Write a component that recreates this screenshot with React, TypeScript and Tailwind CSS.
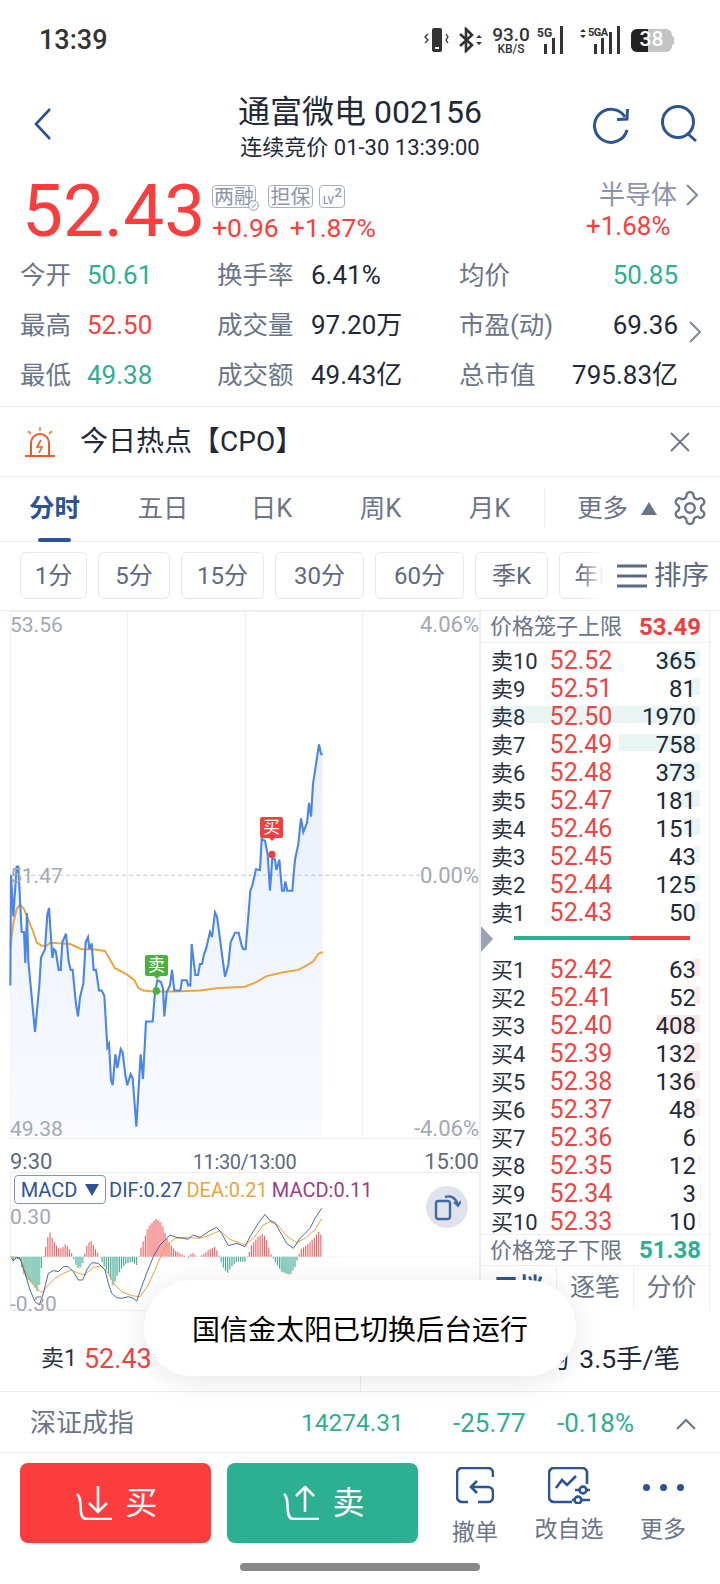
import React from "react";

const blue =
  "31,1090 33,770 40,890 50,745 55,745 65,935 72,935 76,1025 81,880 85,1020 105,1225 118,1090 123,1010 135,985 142,885 147,865 157,1010 162,985 167,990 176,1045 182,1045 187,965 198,940 206,1020 212,1045 218,1045 228,1145 234,1180 240,1125 250,1085 257,965 264,950 268,985 275,968 281,1045 288,1045 297,1105 305,1105 313,1120 322,1270 327,1260 333,1365 338,1380 346,1290 352,1330 362,1275 368,1285 376,1350 382,1380 392,1348 398,1360 409,1500 422,1290 429,1362 438,1195 458,1195 465,1110 472,1075 483,1080 489,1100 493,1180 500,1110 510,1090 516,1045 523,1105 541,1105 546,1075 560,1075 565,1090 571,1090 575,970 586,1060 594,1060 600,1028 606,1028 612,1000 618,985 630,935 636,950 645,878 651,890 675,1065 685,1030 692,965 705,937 716,937 725,975 730,985 737,985 751,815 757,800 768,753 780,755 785,665 795,670 803,710 810,815 817,720 825,725 829,755 838,725 846,815 852,815 856,788 862,815 877,815 885,725 895,680 903,605 910,645 921,618 927,560 933,600 939,505 957,390 963,418 968,420";
const avg =
  "31,980 40,910 50,868 60,856 72,868 85,900 100,935 110,965 125,975 140,975 150,966 175,968 210,970 245,985 280,985 315,990 330,1015 345,1040 380,1058 403,1075 415,1097 430,1105 460,1108 520,1108 600,1105 650,1098 735,1094 770,1080 800,1063 850,1052 895,1045 915,1035 940,1020 955,998 968,993";
const dif =
  "33,382 40,392 50,382 60,385 75,430 90,480 105,515 118,525 130,490 145,430 160,422 175,425 190,410 205,410 220,425 235,450 248,450 260,420 275,398 295,400 315,420 325,460 335,490 350,503 365,505 385,500 400,505 410,513 425,470 440,430 460,380 480,345 510,315 530,322 550,325 565,328 578,315 600,322 625,305 650,292 665,310 685,347 710,340 735,350 750,320 775,280 795,253 810,272 825,278 840,305 860,340 880,355 900,325 930,295 945,265 965,235";
const dea =
  "33,380 60,385 80,430 100,465 125,488 145,465 165,445 190,430 215,420 235,430 255,435 280,412 305,408 325,430 345,465 365,485 395,497 420,500 445,465 480,385 500,345 525,325 560,322 600,325 630,315 660,302 690,328 735,345 760,325 790,285 810,275 835,287 860,318 890,338 915,325 945,300 965,265";

const histPoints: [number, number][] = [
  [33, 0], [40, -15], [48, -5], [60, -10], [70, -50], [85, -70], [100, -85], [115, -110], [122, -40], [127, -25], [130, 0],
  [135, 20], [148, 78], [155, 60], [165, 40], [175, 25], [185, 25], [197, 38], [210, 20], [218, 5], [225, -20], [238, -38],
  [250, -15], [252, 0], [258, 28], [272, 50], [285, 25], [297, 5], [310, -25], [325, -50], [340, -90], [350, -60], [365, -35],
  [380, -20], [395, -15], [410, -25], [415, -5], [422, 25], [435, 60], [445, 90], [470, 115], [485, 100], [500, 55], [515, 30],
  [530, 15], [555, 2], [568, -5], [575, 15], [585, 5], [595, -2], [612, 8], [625, 20], [645, 30], [655, 10], [668, -30],
  [682, -50], [695, -30], [710, -15], [735, -15], [745, 5], [755, 35], [775, 60], [790, 70], [800, 50], [812, 8], [825, -15],
  [845, -45], [870, -55], [885, -30], [893, -5], [902, 22], [925, 38], [945, 60], [955, 75], [968, 60],
];

const histAt = (x: number) => {
  for (let i = 1; i < histPoints.length; i++) {
    const [x0, y0] = histPoints[i - 1];
    const [x1, y1] = histPoints[i];
    if (x <= x1) return y0 + ((y1 - y0) * (x - x0)) / (x1 - x0);
  }
  return 0;
};

// dense stretches of the histogram read as a solid block
const isSolid = (x: number) =>
  (x > 68 && x < 122) || (x > 225 && x < 250) || (x > 335 && x < 352) || (x > 440 && x < 512) || (x > 840 && x < 888);

const bars: { x: number; h: number }[] = [];
for (let x = 33; x <= 968; x += 6.5) bars.push({ x, h: histAt(x) });

const asks = [
  ["卖10", "52.52", 365],
  ["卖9", "52.51", 81],
  ["卖8", "52.50", 1970],
  ["卖7", "52.49", 758],
  ["卖6", "52.48", 373],
  ["卖5", "52.47", 181],
  ["卖4", "52.46", 151],
  ["卖3", "52.45", 43],
  ["卖2", "52.44", 125],
  ["卖1", "52.43", 50],
] as const;

const bids = [
  ["买1", "52.42", 63],
  ["买2", "52.41", 52],
  ["买3", "52.40", 408],
  ["买4", "52.39", 132],
  ["买5", "52.38", 136],
  ["买6", "52.37", 48],
  ["买7", "52.36", 6],
  ["买8", "52.35", 12],
  ["买9", "52.34", 3],
  ["买10", "52.33", 10],
] as const;

const BookRow = ({ label, price, qty, sell }: { label: string; price: string; qty: number; sell: boolean }) => (
  <div className="relative flex h-[28px] items-center pl-[10px] pr-[13px] text-[24px]">
    <div
      className={`absolute right-[9px] top-[3px] h-[17px] ${sell ? "bg-[#e8f5f2]" : "bg-[#fde8e8]"}`}
      style={{ width: (qty / 1970) * 210 }}
    />
    <span className="relative w-[45px] whitespace-nowrap text-[22px] text-[#2b3240]">{label}</span>
    <span className="relative flex w-[90px] justify-center text-[25px] text-[#ef4444]">{price}</span>
    <span className="relative flex-1 text-right text-[#1f2937]">{qty}</span>
  </div>
);

const Stat = ({ label, value, color, w, vw }: { label: string; value: string; color: string; w: string; vw: string }) => (
  <div className={`flex ${w} items-center`}>
    <span className={`${vw} whitespace-nowrap text-[#6b7588]`}>{label}</span>
    <span className={`whitespace-nowrap text-[26px] ${color}`}>{value}</span>
  </div>
);

const StatusBar = () => (
  <div className="flex h-[80px] items-center pl-[39px] text-[#333]">
    <span className="w-[384px] text-[27px] font-medium leading-none">13:39</span>
    <svg width="26" height="26" viewBox="0 0 26 26" className="mr-[10px]">
      <rect x="9" y="1" width="10" height="24" rx="2" fill="#333" />
      <rect x="12" y="20" width="4" height="2" fill="#fff" />
      <path d="M5 7l-3 3 3 3-3 3M23 7l2 3-2 3 2 3" fill="none" stroke="#333" strokeWidth="1.3" />
    </svg>
    <svg width="24" height="26" viewBox="0 0 24 26" className="mr-[6px]">
      <path d="M1 7l12 11-6 6V2l6 6L1 19" fill="none" stroke="#333" strokeWidth="2.6" />
      <path d="M17 11l3-3 3 3zM17 15l3 3 3-3z" fill="#333" />
    </svg>
    <div className="flex w-[44px] flex-col items-center font-medium leading-none">
      <span className="text-[19px] leading-[17px]">93.0</span>
      <span className="text-[12px] leading-[12px]">KB/S</span>
    </div>
    <div className="relative ml-[4px] h-[28px] w-[34px]">
      <span className="absolute left-0 top-0 text-[12px] font-bold leading-[14px]">5G</span>
      <svg width="34" height="28" viewBox="0 0 34 28" className="absolute left-0 top-0">
        <path d="M7 18h3v10H7zM15 12h3v16h-3zM23 0h3v28h-3z" fill="#333" />
      </svg>
    </div>
    <div className="relative ml-[-2px] h-[28px] w-[52px]">
      <svg width="52" height="28" viewBox="0 0 52 28" className="absolute left-0 top-0">
        <path d="M11 6l3-3 3 3zM11 9l3 3 3-3z" fill="#333" />
        <path d="M25 18h3v10h-3zM32 12h3v16h-3zM40 6h3v22h-3zM48 0h3v28h-3z" fill="#333" />
      </svg>
      <span className="absolute left-[19px] top-0 text-[11px] font-bold leading-[14px] tracking-tighter">5GA</span>
    </div>
    <div className="relative ml-[10px] flex h-[23px] w-[41px] items-center justify-center overflow-hidden rounded-[6px] bg-[#c4c4c4]">
      <div className="absolute left-0 top-0 h-full w-[17px] bg-[#222]" />
      <span className="relative text-[21px] font-medium text-white">38</span>
    </div>
    <span className="h-[9px] w-[2px] rounded-r-sm bg-[#c4c4c4]" />
  </div>
);

const Nav = () => (
  <div className="flex h-[92px] items-start">
    <svg width="20" height="34" viewBox="0 0 20 34" className="ml-[33px] mt-[27px]">
      <path d="M17 2L3 17l14 15" fill="none" stroke="#2d5395" strokeWidth="2.6" />
    </svg>
    <div className="ml-[62px] flex w-[490px] flex-col items-center text-[#1f2937]">
      <span className="mt-[11px] text-[32px] leading-[42px]">通富微电 002156</span>
      <span className="text-[22px] leading-[30px]">连续竞价 01-30 13:39:00</span>
    </div>
    <svg width="38" height="38" viewBox="0 0 38 38" className="ml-[-13px] mt-[26px]">
      <path d="M33 11A16.5 16.5 0 1 0 35 24" fill="none" stroke="#2d5395" strokeWidth="3" />
      <path d="M25 13.5L35 13 35.5 3" fill="none" stroke="#2d5395" strokeWidth="3" />
    </svg>
    <svg width="38" height="38" viewBox="0 0 38 38" className="ml-[30px] mt-[25px]">
      <circle cx="18" cy="17" r="15.5" fill="none" stroke="#2d5395" strokeWidth="3" />
      <path d="M27 28l9 8" fill="none" stroke="#2d5395" strokeWidth="3" />
    </svg>
  </div>
);

const Badge = ({ children, w }: { children: React.ReactNode; w: string }) => (
  <span
    className={`relative flex h-[23px] ${w} items-center justify-center rounded-[4px] border border-[#a9afc0] text-[20px] leading-none text-[#8d94a8]`}
  >
    {children}
  </span>
);

const Quote = () => (
  <div className="flex h-[78px] items-start">
    <span className="ml-[22px] mt-[-3px] w-[190px] text-[73px] leading-[84px] text-[#fc3d3d]">52.43</span>
    <div className="mt-[13px] w-[370px]">
      <div className="flex gap-[12px]">
        <Badge w="w-[44px]">
          两融
          <svg width="11" height="11" viewBox="0 0 11 11" className="absolute right-[-4px] top-[14px]">
            <circle cx="5.5" cy="5.5" r="4.8" fill="#fff" stroke="#8d94a8" />
            <path d="M3 5.5l2 2 3-3.5" fill="none" stroke="#8d94a8" />
          </svg>
        </Badge>
        <Badge w="w-[45px]">担保</Badge>
        <span className="relative ml-[-6px] flex h-[23px] w-[26px] items-end rounded-[4px] border border-[#a9afc0] pb-[1px] pl-[3px] text-[10px] font-medium leading-none text-[#8d94a8]">
          LV
          <span className="absolute right-[2px] top-0 text-[13px]">2</span>
        </span>
      </div>
      <div className="mt-[5px] flex gap-[11px] text-[26.5px] leading-[30px] text-[#fc3d3d]">
        <span>+0.96</span>
        <span>+1.87%</span>
      </div>
    </div>
    <div className="mt-[7px] flex flex-1 flex-col">
      <div className="flex items-center pl-[17px] text-[26px] leading-[32px] text-[#8d94a8]">
        半导体
        <svg width="14" height="24" viewBox="0 0 14 24" className="ml-[8px]">
          <path d="M2 2l10 10L2 22" fill="none" stroke="#7f889c" strokeWidth="2" />
        </svg>
      </div>
      <span className="mt-[-1px] pl-[4px] text-[26px] leading-[32px] text-[#fc3d3d]">+1.68%</span>
    </div>
  </div>
);

const Stats = () => (
  <div className="relative flex h-[157px] flex-col border-b border-[#e9ebef] text-[25.5px]">
    <div className="flex h-[50px] pl-[20px]">
      <Stat label="今开" value="50.61" color="text-[#2fae90]" w="w-[197px]" vw="w-[67px]" />
      <Stat label="换手率" value="6.41%" color="text-[#1f2937]" w="w-[242px]" vw="w-[94px]" />
      <span className="flex w-[219px] items-center justify-between text-[#6b7588]">
        均价<span className="text-[26px] text-[#2fae90]">50.85</span>
      </span>
    </div>
    <div className="flex h-[50px] pl-[20px]">
      <Stat label="最高" value="52.50" color="text-[#ef4444]" w="w-[197px]" vw="w-[67px]" />
      <Stat label="成交量" value="97.20万" color="text-[#1f2937]" w="w-[242px]" vw="w-[94px]" />
      <span className="flex w-[219px] items-center justify-between text-[#6b7588]">
        市盈(动)<span className="text-[26px] text-[#1f2937]">69.36</span>
      </span>
    </div>
    <div className="flex h-[50px] pl-[20px]">
      <Stat label="最低" value="49.38" color="text-[#2fae90]" w="w-[197px]" vw="w-[67px]" />
      <Stat label="成交额" value="49.43亿" color="text-[#1f2937]" w="w-[242px]" vw="w-[94px]" />
      <span className="flex w-[219px] items-center justify-between text-[#6b7588]">
        总市值<span className="text-[26px] text-[#1f2937]">795.83亿</span>
      </span>
    </div>
    <svg width="14" height="24" viewBox="0 0 14 24" className="absolute left-[688px] top-[70px]">
      <path d="M2 2l10 10L2 22" fill="none" stroke="#7f889c" strokeWidth="2" />
    </svg>
  </div>
);

const HotBar = () => (
  <div className="flex h-[70px] items-center border-b border-[#e9ebef]">
    <svg width="32" height="32" viewBox="0 0 32 32" className="ml-[24px]">
      <path d="M1 30h30" stroke="#ea5a2a" strokeWidth="2" />
      <path d="M7 30V17a9 9 0 0 1 18 0v13" fill="none" stroke="#ea5a2a" strokeWidth="2" />
      <path d="M17 14l-4 7h5l-3 6" fill="none" stroke="#ea5a2a" strokeWidth="1.6" />
      <path d="M16 1v4M4 5l3 3M28 5l-3 3" stroke="#f08a4a" strokeWidth="1.8" />
    </svg>
    <span className="ml-[24px] w-[589px] text-[28px] text-[#1f2937]">今日热点【CPO】</span>
    <svg width="22" height="22" viewBox="0 0 22 22">
      <path d="M2 2l18 18M20 2L2 20" stroke="#6b7588" strokeWidth="1.8" />
    </svg>
  </div>
);

const Tabs = () => (
  <div className="relative flex h-[65px] items-center border-b border-[#e9ebef] pb-[2px] text-[25.5px] text-[#6b7588]">
    <span className="flex w-[109px] justify-center font-bold text-[#2d5395]">分时</span>
    <span className="flex w-[108px] justify-center">五日</span>
    <span className="flex w-[109px] justify-center">日K</span>
    <span className="flex w-[109px] justify-center">周K</span>
    <span className="flex w-[109px] justify-center">月K</span>
    <span className="h-[38px] w-px bg-[#e9ebef]" />
    <span className="ml-[32px]">更多</span>
    <span className="ml-[13px] h-0 w-0 border-x-[8px] border-b-[13px] border-x-transparent border-b-[#6b7588]" />
    <svg width="38" height="38" viewBox="0 0 24 24" className="ml-[14px]" fill="none" stroke="#6b7588" strokeWidth="1.5">
      <path d="M12.22 2h-.44a2 2 0 0 0-2 2v.18a2 2 0 0 1-1 1.73l-.43.25a2 2 0 0 1-2 0l-.15-.08a2 2 0 0 0-2.73.73l-.22.38a2 2 0 0 0 .73 2.73l.15.1a2 2 0 0 1 1 1.72v.51a2 2 0 0 1-1 1.74l-.15.09a2 2 0 0 0-.73 2.73l.22.38a2 2 0 0 0 2.73.73l.15-.08a2 2 0 0 1 2 0l.43.25a2 2 0 0 1 1 1.73V20a2 2 0 0 0 2 2h.44a2 2 0 0 0 2-2v-.18a2 2 0 0 1 1-1.73l.43-.25a2 2 0 0 1 2 0l.15.08a2 2 0 0 0 2.73-.73l.22-.39a2 2 0 0 0-.73-2.73l-.15-.08a2 2 0 0 1-1-1.74v-.5a2 2 0 0 1 1-1.74l.15-.09a2 2 0 0 0 .73-2.73l-.22-.38a2 2 0 0 0-2.73-.73l-.15.08a2 2 0 0 1-2 0l-.43-.25a2 2 0 0 1-1-1.73V4a2 2 0 0 0-2-2z" />
      <circle cx="12" cy="12" r="3" />
    </svg>
    <span className="absolute bottom-[-1px] left-[38px] h-[4px] w-[33px] rounded-full bg-[#2d5395]" />
  </div>
);

const Chip = ({ w, children }: { w: string; children: React.ReactNode }) => (
  <span
    className={`flex h-[47px] ${w} shrink-0 items-center justify-center rounded-[6px] border border-[#e5e7eb] text-[24px] text-[#5e6a80]`}
  >
    {children}
  </span>
);

const Chips = () => (
  <div className="relative flex h-[69px] items-center gap-[11px] overflow-hidden border-b border-[#e9ebef] pb-[1px] pl-[20px]">
    <Chip w="w-[67px]">1分</Chip>
    <Chip w="w-[72px]">5分</Chip>
    <Chip w="w-[83px]">15分</Chip>
    <Chip w="w-[89px]">30分</Chip>
    <Chip w="w-[89px]">60分</Chip>
    <Chip w="w-[73px]">季K</Chip>
    <Chip w="w-[70px]">年K</Chip>
    <div className="absolute right-0 top-[3px] flex h-[62px] w-[140px] items-center bg-gradient-to-r from-transparent via-white via-[17%] to-white pl-[37px] text-[27.5px] text-[#5e6a80]">
      <svg width="30" height="24" viewBox="0 0 30 24">
        <path d="M0 2h30M0 12h30M0 22h30" stroke="#5e6a80" strokeWidth="3" />
      </svg>
      <span className="ml-[7px] whitespace-nowrap">排序</span>
    </div>
  </div>
);

const PriceChart = () => (
  <div className="relative ml-[10px] h-[528px] w-[470px] border border-[#eceef2]">
    <div className="flex h-full">
      <div className="flex-1 border-r border-[#eceef2]" />
      <div className="flex-1 border-r border-[#eceef2]" />
      <div className="flex-1 border-r border-[#eceef2]" />
      <div className="flex-1" />
    </div>
    <svg
      viewBox="0 0 1440 1568"
      preserveAspectRatio="none"
      className="absolute left-[-11px] top-[-2px] h-[540px] w-[480px] overflow-visible"
    >
      <defs>
        <linearGradient id="area" gradientUnits="userSpaceOnUse" x1="0" y1="390" x2="0" y2="1530">
          <stop offset="0" stopColor="#e9effb" />
          <stop offset="1" stopColor="#f8faff" />
        </linearGradient>
      </defs>
      <polygon points={`31,1532 ${blue} 968,1532`} fill="url(#area)" />
      <path d="M31 770H1270" stroke="#b9c0d0" strokeWidth="1" strokeDasharray="4 3" vectorEffect="non-scaling-stroke" />
      <polyline points={avg} fill="none" stroke="#eda43c" strokeWidth="2" vectorEffect="non-scaling-stroke" />
      <polyline points={blue} fill="none" stroke="#4a86e8" strokeWidth="2.1" vectorEffect="non-scaling-stroke" />
      <ellipse cx="469" cy="1106" rx="11" ry="11" fill="#4caf3f" />
      <ellipse cx="816" cy="710" rx="11" ry="11" fill="#f43f3f" />
    </svg>
    <span className="absolute left-[-1px] top-[1px] text-[21px] leading-[24px] text-[#a3a8b3]">53.56</span>
    <span className="absolute right-0 top-[1px] text-[22px] leading-[24px] text-[#a3a8b3]">4.06%</span>
    <span className="absolute left-[-1px] top-[252px] text-[21px] leading-[24px] text-[#a3a8b3]">51.47</span>
    <span className="absolute right-0 top-[252px] text-[22px] leading-[24px] text-[#a3a8b3]">0.00%</span>
    <span className="absolute bottom-[-3px] left-[-1px] text-[21px] leading-[24px] text-[#a3a8b3]">49.38</span>
    <span className="absolute bottom-[-3px] right-0 text-[22px] leading-[24px] text-[#a3a8b3]">-4.06%</span>
    <span className="absolute left-[134px] top-[343px] flex h-[21px] w-[23px] items-center justify-center rounded-[2px] bg-[#4caf3f] text-[17px] leading-none text-white after:absolute after:bottom-[-3px] after:h-0 after:w-0 after:border-x-[3px] after:border-t-[3px] after:border-x-transparent after:border-t-[#4caf3f]">
      卖
    </span>
    <span className="absolute left-[249px] top-[205px] flex h-[21px] w-[23px] items-center justify-center rounded-[2px] bg-[#f43f3f] text-[17px] leading-none text-white after:absolute after:bottom-[-3px] after:h-0 after:w-0 after:border-x-[3px] after:border-t-[3px] after:border-x-transparent after:border-t-[#f43f3f]">
      买
    </span>
  </div>
);

const TimeAxis = () => (
  <div className="grid h-[33px] grid-cols-[1fr_auto_1fr] items-center pl-[10px] pr-[1px] pt-[6px] text-[22px] text-[#5e6a80]">
    <span>9:30</span>
    <span className="text-[20px] tracking-[-0.02em]">11:30/13:00</span>
    <span className="text-right">15:00</span>
  </div>
);

const Macd = () => (
  <div className="relative ml-[10px] h-[139px] w-[470px] border border-[#eceef2]">
    <svg
      viewBox="0 0 1440 600"
      className="absolute left-[-11px] top-[-43px] h-[200px] w-[480px] overflow-visible"
    >
      <path d="M33 380H1440" stroke="#e5e7eb" strokeWidth="2" strokeDasharray="6 6" />
      {bars.map((b) => (
        <line
          key={b.x}
          x1={b.x}
          x2={b.x}
          y1={380}
          y2={380 - b.h}
          stroke={b.h > 0 ? "#ee5a5a" : "#35a78e"}
          strokeWidth={isSolid(b.x) ? 6.8 : 3.4}
          strokeOpacity={isSolid(b.x) ? 0.55 : 0.95}
        />
      ))}
      <polyline points={dea} fill="none" stroke="#eda43c" strokeWidth="3" />
      <polyline points={dif} fill="none" stroke="#2d5395" strokeWidth="2.6" />
    </svg>
    <div className="relative flex items-center whitespace-nowrap pl-[3px] pt-[2px] text-[20px] leading-[28px]">
      <span className="flex h-[29px] w-[92px] items-center justify-center gap-[8px] rounded-[4px] border border-[#7f97bd] bg-white text-[#2d5395]">
        MACD
        <span className="h-0 w-0 border-x-[7px] border-t-[12px] border-x-transparent border-t-[#2d5395]" />
      </span>
      <span className="ml-[3px] text-[#2d5395]">DIF:0.27</span>
      <span className="ml-[4px] text-[#eda43c]">DEA:0.21</span>
      <span className="ml-[4px] text-[#a03c7e]">MACD:0.11</span>
    </div>
    <span className="absolute left-[-1px] top-[32px] text-[21px] leading-[24px] text-[#a3a8b3]">0.30</span>
    <span className="absolute left-[-1px] top-[119px] text-[21px] leading-[24px] text-[#a3a8b3]">-0.30</span>
    <div className="absolute left-[415px] top-[13px] flex h-[42px] w-[42px] items-center justify-center rounded-full bg-[#dfe3ec]">
      <svg width="28" height="28" viewBox="0 0 28 28" fill="none" stroke="#4069aa" strokeWidth="2.4">
        <rect x="3" y="8" width="14" height="18" rx="2.5" />
        <path d="M12 4c6-2 11 1 13 8" />
        <path d="M21 9l4 4 3-5" strokeWidth="2" />
      </svg>
    </div>
  </div>
);

const OrderBook = () => (
  <div className="h-[700px] w-[230px] border-x border-[#eceef2]">
    <div className="flex h-[32px] items-center justify-between border-b border-[#eceef2] pl-[9px] pr-[8px]">
      <span className="text-[22px] text-[#6b7588]">价格笼子上限</span>
      <span className="text-[24px] font-bold text-[#f03e3e]">53.49</span>
    </div>
    <div className="pt-[4px]">
      {asks.map(([label, price, qty]) => (
        <BookRow key={label} label={label} price={price} qty={qty} sell />
      ))}
    </div>
    <div className="relative flex h-[29px] items-center pb-[8px] pl-[33px]">
      <span className="absolute left-0 top-[-1px] h-0 w-0 border-y-[13px] border-l-[12px] border-y-transparent border-l-[#9aa3b5]" />
      <span className="h-[4px] w-[116px] bg-[#2fae90]" />
      <span className="h-[4px] w-[60px] bg-[#f43f3f]" />
    </div>
    <div className="h-[278px]">
      {bids.map(([label, price, qty]) => (
        <BookRow key={label} label={label} price={price} qty={qty} sell={false} />
      ))}
    </div>
    <div className="relative flex h-[32px] items-center justify-between border-y border-[#eceef2] bg-white pl-[9px] pr-[8px]">
      <span className="text-[22px] text-[#6b7588]">价格笼子下限</span>
      <span className="text-[24px] font-bold text-[#2fae90]">51.38</span>
    </div>
    <div className="flex h-[43px] items-center text-[25px] text-[#6b7588]">
      <span className="flex h-full w-[76px] items-center justify-center border-r border-[#eceef2] font-bold text-[#2d5395]">
        五档
      </span>
      <span className="flex h-full w-[77px] items-center justify-center border-r border-[#eceef2]">逐笔</span>
      <span className="flex flex-1 justify-center">分价</span>
    </div>
  </div>
);

const TradeRow = () => (
  <div className="flex h-[81px] border-b border-[#e9ebef] text-[26.5px]">
    <div className="flex w-[361px] items-center border-r border-[#e9ebef] pl-[41px] pt-[16px] text-[23px] text-[#2b3240]">
      卖1<span className="ml-[7px] text-[27px] text-[#ef4444]">52.43</span>
    </div>
    <div className="flex flex-1 items-center justify-end pr-[40px] pt-[16px] text-[#1f2937]">
      笔均<span className="ml-[10px]">3.5手/笔</span>
    </div>
  </div>
);

const IndexRow = () => (
  <div className="flex h-[61px] items-center border-b border-[#e9ebef] pl-[30px] pt-[3px] text-[26px]">
    <span className="w-[271px] text-[#6b7588]">深证成指</span>
    <span className="w-[152px] text-[24.5px] text-[#2fae90]">14274.31</span>
    <span className="w-[104px] text-[#2fae90]">-25.77</span>
    <span className="w-[118px] text-[#2fae90]">-0.18%</span>
    <svg width="22" height="14" viewBox="0 0 22 14">
      <path d="M2 12l9-9 9 9" fill="none" stroke="#6b7588" strokeWidth="2" />
    </svg>
  </div>
);

const BottomBar = () => (
  <div className="relative flex h-[132px] items-start pl-[20px] pt-[10px]">
    <button className="flex h-[80px] w-[191px] items-center justify-center rounded-[8px] bg-[#fc3d3d] text-[32px] text-white">
      <svg width="38" height="34" viewBox="0 0 38 34" fill="none" stroke="#fff" strokeWidth="2.6" className="ml-[3px]">
        <path d="M1 8c4 3 3 9 4 18 .5 5 3 7 6 7h25" />
        <path d="M22 0v24M13 17l9 9 9-9" />
      </svg>
      <span className="ml-[11px]">买</span>
    </button>
    <button className="ml-[16px] flex h-[80px] w-[191px] items-center justify-center rounded-[8px] bg-[#2db092] text-[32px] text-white">
      <svg width="38" height="34" viewBox="0 0 38 34" fill="none" stroke="#fff" strokeWidth="2.6" className="ml-[3px]">
        <path d="M1 8c4 3 3 9 4 18 .5 5 3 7 6 7h25" />
        <path d="M22 26V2M13 10l9-9 9 9" />
      </svg>
      <span className="ml-[11px]">卖</span>
    </button>
    <div className="ml-[10px] flex w-[94px] flex-col items-center text-[23px] text-[#6b7588]">
      <svg width="38" height="37" viewBox="0 0 38 37" fill="none" stroke="#2d5395" strokeWidth="2.6" className="mt-[4px]">
        <path d="M12 35H6a5 5 0 0 1-5-5V6a5 5 0 0 1 5-5h26a5 5 0 0 1 5 5v4" />
        <path d="M21 14l-6 6 6 6M15 20h17a5 5 0 0 1 5 5v5a5 5 0 0 1-5 5H22" />
      </svg>
      <span className="mt-[13px] leading-[32px]">撤单</span>
    </div>
    <div className="flex w-[94px] flex-col items-center text-[23px] text-[#6b7588]">
      <svg width="42" height="37" viewBox="0 0 42 37" fill="none" stroke="#2d5395" strokeWidth="2.6" className="mt-[4px]">
        <path d="M24 35H6a5 5 0 0 1-5-5V6a5 5 0 0 1 5-5h28a5 5 0 0 1 5 5v11" />
        <path d="M8 21l6-8 5 5 9-9" />
        <path d="M27 23h15M24 33h18" />
        <circle cx="35" cy="23" r="3.4" fill="#fff" />
        <circle cx="30" cy="33" r="3.4" fill="#fff" />
      </svg>
      <span className="mt-[10px] leading-[32px]">改自选</span>
    </div>
    <div className="flex w-[94px] flex-col items-center text-[23px] text-[#6b7588]">
      <div className="flex h-[41px] items-center gap-[10px] pt-[8px]">
        <span className="h-[7px] w-[7px] rounded-full bg-[#2d5395]" />
        <span className="h-[7px] w-[7px] rounded-full bg-[#2d5395]" />
        <span className="h-[7px] w-[7px] rounded-full bg-[#2d5395]" />
      </div>
      <span className="mt-[10px] leading-[32px]">更多</span>
    </div>
    <div className="absolute bottom-[14px] left-[240px] h-[8px] w-[240px] rounded-full bg-[#888]" />
  </div>
);

export default function App() {
  return (
    <div className="relative h-[1584px] w-[720px] overflow-hidden bg-white font-[Roboto,'Noto_Sans_CJK_SC',sans-serif]">
      <StatusBar />
      <Nav />
      <Quote />
      <Stats />
      <HotBar />
      <Tabs />
      <Chips />
      <div className="flex">
        <div className="w-[480px]">
          <PriceChart />
          <TimeAxis />
          <Macd />
        </div>
        <OrderBook />
      </div>
      <TradeRow />
      <IndexRow />
      <BottomBar />
      <div className="absolute left-[144px] top-[1280px] flex h-[96px] w-[432px] items-center justify-center rounded-[48px] bg-white pt-[5px] text-[28px] text-black shadow-[0_4px_30px_rgba(0,0,0,0.1)]">
        国信金太阳已切换后台运行
      </div>
    </div>
  );
}
